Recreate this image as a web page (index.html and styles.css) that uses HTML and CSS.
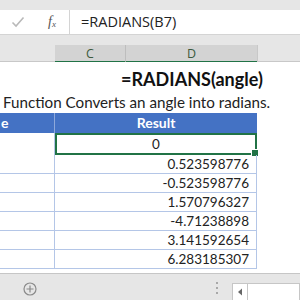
FILE: index.html
```html
<!DOCTYPE html>
<html>
<head>
<meta charset="utf-8">
<link rel="stylesheet" href="styles.css">
</head>
<body>
<div class="app">
  <div class="topstrip"></div>
  <div class="fbar">
    <div class="tools">
      <svg class="check" width="14" height="12" viewBox="0 0 14 12"><path d="M1.5 6.5 L5 10 L12.5 1.5" fill="none" stroke="#b9b9b9" stroke-width="1.6"/></svg>
      <span class="fx">f<sub>x</sub></span>
    </div>
    <div class="finput">=RADIANS(B7)</div>
  </div>
  <div class="gap"></div>
  <div class="colheads">
    <div class="ch ch-b"></div>
    <div class="ch ch-c sel">C</div>
    <div class="ch ch-d sel">D</div>
    <div class="ch ch-rest"></div>
  </div>
  <div class="sheet">
    <div class="title"><span>=RADIANS(angle)</span></div>
    <div class="desc">Function Converts an angle into radians.</div>
    <div class="table">
      <div class="row head"><div class="cb">e</div><div class="cv">Result</div><div class="cr"></div></div>
      <div class="row selrow"><div class="cb"></div><div class="cv center active">0<span class="handle"></span></div><div class="cr"></div></div>
      <div class="row"><div class="cb"></div><div class="cv">0.523598776</div><div class="cr"></div></div>
      <div class="row"><div class="cb"></div><div class="cv">-0.523598776</div><div class="cr"></div></div>
      <div class="row"><div class="cb"></div><div class="cv">1.570796327</div><div class="cr"></div></div>
      <div class="row"><div class="cb"></div><div class="cv">-4.71238898</div><div class="cr"></div></div>
      <div class="row"><div class="cb"></div><div class="cv">3.141592654</div><div class="cr"></div></div>
      <div class="row"><div class="cb"></div><div class="cv">6.283185307</div><div class="cr"></div></div>
    </div>
  </div>
  <div class="tabsbar">
    <svg class="plus" width="14" height="14" viewBox="0 0 14 14"><circle cx="7" cy="7" r="6" fill="none" stroke="#8a8a8a" stroke-width="1.2"/><path d="M7 3.5V10.5M3.5 7H10.5" stroke="#8a8a8a" stroke-width="1.2"/></svg>
    <div class="dots"><i></i><i></i><i></i></div>
    <div class="scroll">
      <div class="sbtn"><svg width="6" height="8" viewBox="0 0 6 8"><path d="M5 0.5V7.5L1 4Z" fill="#666"/></svg></div>
      <div class="strack"></div>
    </div>
  </div>
</div>
</body>
</html>
```
FILE: styles.css
```css
* { box-sizing: border-box; }
html, body { margin: 0; padding: 0; }
body { width: 300px; height: 300px; overflow: hidden; background: #fff; font-family: Lato, "Open Sans", sans-serif; }
.app { width: 300px; height: 300px; display: flex; flex-direction: column; overflow: hidden; }

.topstrip { height: 10px; background: #e6e6e6; flex: none; }
.fbar { height: 25px; flex: none; display: flex; background: #fff; border-bottom: 1px solid #d4d4d4; }
.tools { width: 70px; flex: none; display: flex; align-items: center; position: relative; border-right: 1px solid #d4d4d4; background: #fff; }
.check { margin-left: 11px; }
.fx { margin-left: 23px; font-family: "Liberation Serif", serif; font-style: italic; font-size: 14px; color: #555; line-height: 1; }
.fx sub { font-size: 9px; vertical-align: -1px; }
.finput { flex: 1; padding-left: 11px; font-family: "Open Sans", sans-serif; font-size: 14.5px; color: #222; line-height: 24px; white-space: nowrap; }

.gap { height: 10px; flex: none; background: #e6e6e6; }
.colheads { height: 17px; flex: none; display: flex; background: #e6e6e6; border-bottom: 1px solid #c8c8c8; }
.ch { height: 17px; font-family: "Open Sans", sans-serif; font-size: 12.5px; color: #3d5a3d; text-align: center; line-height: 17px; }
.ch-b { width: 55px; }
.ch-c { width: 70px; }
.ch-d { width: 132px; border-left: 1px solid #bdbdbd; }
.ch-rest { flex: 1; border-left: 1px solid #c8c8c8; }
.sel { background: #d3d3d3; border-bottom: 2px solid #217346; height: 18px; }

.sheet { flex: 1; background: #fff; }
.title { height: 28px; margin-left: 125px; width: 134px; display: flex; justify-content: center; align-items: flex-end; white-space: nowrap; font-weight: 700; font-size: 18px; color: #111; line-height: 22px; }
.desc { height: 23px; padding-left: 3px; font-size: 15.2px; color: #222; white-space: nowrap; line-height: 20px; padding-top: 2px; }

.table { display: flex; flex-direction: column; }
.row { display: flex; height: 19px; font-size: 13.5px; color: #222; }
.cb { width: 55px; flex: none; border-right: 1px solid #b4c6e7; border-bottom: 1px solid #b4c6e7; }
.cv { width: 202px; flex: none; text-align: right; padding-right: 7px; line-height: 18px; border-right: 1px solid #b4c6e7; border-bottom: 1px solid #b4c6e7; position: relative; white-space: nowrap; }
.cr { flex: 1; }
.row.head { height: 20px; background: #4472c4; color: #fff; font-weight: 700; font-size: 14px; }
.row.head .cb { border-right: 1px solid #8ea9db; border-bottom: none; padding-left: 1px; line-height: 20px; }
.row.head .cv { text-align: center; padding-right: 0; line-height: 20px; border-right: none; border-bottom: none; }
.row.head .cr { background: #fff; }
.selrow { height: 22px; }
.selrow .cb { border-bottom: none; }
.cv.center { text-align: center; padding-right: 0; line-height: 18px; }
.active { border: 2px solid #217346; }
.handle { position: absolute; right: -4px; bottom: -4px; width: 6px; height: 6px; background: #217346; border: 1px solid #fff; box-sizing: content-box; }

.tabsbar { height: 27px; flex: none; background: #e6e6e6; border-top: 1px solid #c6c6c6; display: flex; align-items: flex-start; }
.plus { margin-left: 23px; margin-top: 8px; }
.dots { margin-left: 179px; margin-top: 8px; display: flex; flex-direction: column; gap: 3px; }
.dots i { display: block; width: 2px; height: 2px; background: #a8a8a8; }
.scroll { margin-left: 14px; margin-top: 9px; flex: 1; display: flex; height: 18px; }
.sbtn { width: 15px; background: #fff; border: 1px solid #c6c6c6; border-right: none; display: flex; align-items: center; justify-content: center; }
.strack { flex: 1; background: #fff; border: 1px solid #c6c6c6; }
```
